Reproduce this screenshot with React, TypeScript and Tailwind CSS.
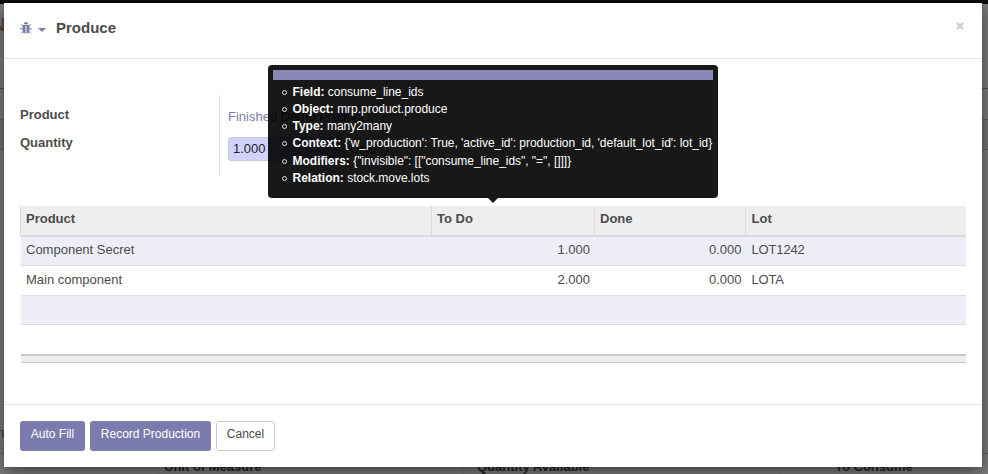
import type { ReactNode } from "react";

const facts: [string, string][] = [
  ["Field:", "consume_line_ids"],
  ["Object:", "mrp.product.produce"],
  ["Type:", "many2many"],
  ["Context:", "{'w_production': True, 'active_id': production_id, 'default_lot_id': lot_id}"],
  ["Modifiers:", "{\"invisible\": [[\"consume_line_ids\", \"=\", []]]}"],
  ["Relation:", "stock.move.lots"],
];

const rows = [
  { product: "Component Secret", todo: "1.000", done: "0.000", lot: "LOT1242" },
  { product: "Main component", todo: "2.000", done: "0.000", lot: "LOTA" },
];

const columns = "grid grid-cols-[410px_163px_151.5px_1fr]";

function BugIcon() {
  return (
    <svg viewBox="0 0 12 12" className="mt-[4px] size-[12px] text-[#7c7bad]" fill="currentColor">
      <path d="M3.8 2.2a2.2 2.2 0 0 1 4.4 0z" />
      <path d="M2.6 3h6.800v1H2.600z" />
      <path d="M2.600 4h2.900v7.700C3.600 11.500 2.600 10.500 2.600 8.800zM6.500 4h2.900v4.800c0 1.700-1 2.700-2.900 2.900z" />
      <path d="M1.200 2.200 3 4M10.800 2.200 9 4M0 6.900h3M12 6.900H9M1.200 11.400l2-2.100M10.800 11.400l-2-2.100" stroke="currentColor" strokeWidth="1" />
    </svg>
  );
}

function Tooltip() {
  return (
    <div className="absolute left-[268px] top-[65px] z-20 h-[138px] w-[450px] opacity-90">
      <div className="h-[133px] rounded bg-black p-[5px] text-xs leading-[17.14px] text-white">
        <div className="h-[10px] bg-[#7c7bad]" />
        <ul className="pl-[19.5px] pt-[4px]">
          {facts.map(([label, value]) => (
            <li key={label} className="relative h-[17.14px] whitespace-pre">
              <span className="absolute left-[-10.5px] top-[6px] size-[5px] rounded-full border border-[#ddd]" />
              <b>{label}</b>
              <span className="tracking-[-0.03px]"> {value}</span>
            </li>
          ))}
        </ul>
      </div>
      <div className="mx-auto size-0 border-x-[5px] border-t-[5px] border-x-transparent border-t-black" />
    </div>
  );
}

function Cell({ children, right }: { children?: ReactNode; right?: boolean }) {
  return <div className={right ? "pr-[4px] text-right" : "pl-[5px]"}>{children}</div>;
}

function Backdrop() {
  return (
    <div className="absolute inset-0 overflow-hidden bg-[#7c7b7a]">
      <div className="h-[4px] bg-[#0d0c0c]" />
      <div className="h-[85px] border-b border-[#505050] text-[18px] leading-[43px] text-[#5a352c]"><span className="-ml-[8px]">N</span></div>
      <div className="h-[31px] border-b border-[#606060]" />
      <div className="h-[30px] border-b border-[#606060] bg-[#727272]" />
      <div className="absolute -left-[3px] top-[424px] text-[13px] leading-[18px] text-[#333]">n</div>
      <div className="absolute inset-x-0 top-[453px] h-[21px] border-t border-[#666] bg-[#7e7e7e] text-[13px] font-bold leading-[26px] text-[#262626]">
        <span className="absolute left-[164px]">Unit of Measure</span>
        <span className="absolute left-[477px]">Quantity Available</span>
        <span className="absolute left-[835px]">To Consume</span>
        <span className="absolute left-[158px] h-full border-l border-[#737373]" />
        <span className="absolute left-[463px] h-full border-l border-[#737373]" />
        <span className="absolute left-[780px] h-full border-l border-[#737373]" />
      </div>
    </div>
  );
}

export default function App() {
  return (
    <div className="relative h-[474px] w-[988px] overflow-hidden font-['Liberation_Sans',Arial,sans-serif] text-[13px] leading-[18px] text-[#4c4c4c]">
      <Backdrop />
      <div className="relative flex h-full flex-col pb-[7px] pl-[4px] pr-[6px] pt-[3px]">
        <main className="flex flex-1 flex-col bg-white shadow-[0_5px_15px_rgba(0,0,0,0.5)]">
          <header className="flex h-[56px] items-start border-b border-[#e5e5e5] px-[16px] pt-[15px]">
            <BugIcon />
            <div className="ml-[6px] mt-[10px] size-0 border-x-[4.5px] border-t-[4.5px] border-x-transparent border-t-[#7c7bad]" />
            <h4 className="ml-[10px] text-[15px] font-bold leading-[20px]">Produce</h4>
            <svg viewBox="0 0 8 8" className="ml-auto mr-[2px] mt-[4px] size-[8px]">
              <path d="M1 1l6 6M7 1L1 7" stroke="#ccc" strokeWidth="2.4" />
            </svg>
          </header>

          <section className="flex-1 px-[16px]">
            <div className="mt-[36px] flex h-[81px]">
              <div className="w-[200px] border-r border-[#ddd] pt-[11px] font-bold">
                <div className="h-[28px]">Product</div>
                <div>Quantity</div>
              </div>
              <div className="pl-[8px] pt-[13px]">
                <div className="h-[29px] text-[#7c7bad]">Finished <span className="text-[#4c4c4c]">Demo Product</span></div>
                <div className="flex items-center gap-[5px]">
                  <div className="h-[24px] w-[117px] rounded-[3px] border border-[#ccc] bg-[#d2d2ff] pl-[4px] leading-[21px] text-[#1f1f1f]">1.000</div>
                  <span>Unit(s)</span>
                </div>
              </div>
            </div>

            <div className="mt-[30px] w-[946px]">
              <div className={`${columns} h-[31px] border-b-2 border-[#dcdcdc] bg-[#eee] font-bold leading-[25px]`}>
                <div className="border-l border-[#dcdcdc] pl-[5px]">Product</div>
                <div className="ml-px border-l border-[#dcdcdc] pl-[5px]">To Do</div>
                <div className="ml-px border-l border-[#dcdcdc] pl-[5px]">Done</div>
                <div className="border-l border-[#dcdcdc] pl-[6px]">Lot</div>
              </div>
              <div className="ml-px">
                {rows.map((row, i) => (
                  <div key={row.lot} className={`${columns} border-b border-[#dcdcdc] ${i === 0 ? "h-[29px] bg-[#eeeef8] leading-[25px]" : "h-[30px] leading-[27px]"}`}>
                    <Cell>{row.product}</Cell>
                    <Cell right>{row.todo}</Cell>
                    <Cell right>{row.done}</Cell>
                    <Cell><span className="ml-px tracking-[-0.15px]">{row.lot}</span></Cell>
                  </div>
                ))}
                <div className="h-[29px] border-b border-[#dcdcdc] bg-[#eeeef8]" />
                <div className="h-[29px]" />
                <div className="h-[9px] border-b border-t-2 border-[#c8c8c8] bg-[#eee]" />
              </div>
            </div>
          </section>

          <footer className="flex h-[63px] gap-[5px] border-t border-[#e5e5e5] px-[16px] pt-[16px] text-xs leading-[26px] text-white">
            <button className="h-[30px] w-[65px] whitespace-nowrap rounded-[3px] bg-[#7c7bad] pb-[4px]">Auto Fill</button>
            <button className="h-[30px] w-[121px] whitespace-nowrap rounded-[3px] bg-[#7c7bad] pb-[4px]">Record Production</button>
            <button className="flex h-[30px] w-[59px] justify-center rounded-[3px] border border-[#ccc] bg-white leading-[24px] text-[#4c4c4c]">Cancel</button>
          </footer>
        </main>
      </div>
      <Tooltip />
    </div>
  );
}
